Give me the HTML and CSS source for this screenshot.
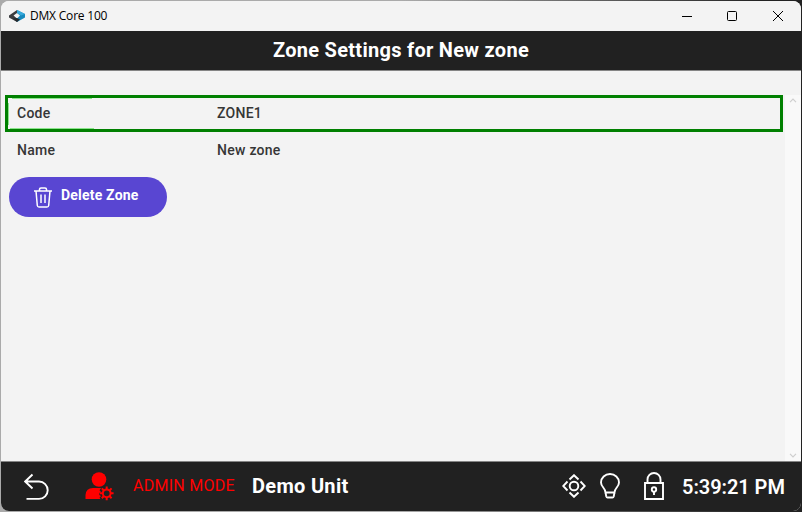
FILE: index.html
```html
<!DOCTYPE html>
<html lang="en">
<head>
<meta charset="utf-8">
<title>DMX Core 100</title>
<link rel="stylesheet" href="styles.css">
</head>
<body>
<div class="window">
  <header class="titlebar">
    <svg class="logo" width="16" height="14" viewBox="0 0 16 14">
      <path d="M0 6.500 8 1v3L4.500 6.500 8 9.500V13L0 8.500z" fill="#3b3d40"/>
      <path d="M8 1l8 4v3.500L8 13V9.500l3-3L8 4z" fill="#1689bd"/>
      <path d="M8 1l8 4-4 1.500L8 4z" fill="#36a9dc"/>
      <path d="M4 9.500 8 9l3 1.500L8 13z" fill="#242a2e"/>
    </svg>
    <span class="app-name">DMX Core 100</span>
    <div class="controls">
      <svg width="10" height="10" viewBox="0 0 10 10"><path d="M0 5.500h10"/></svg>
      <svg width="10" height="10" viewBox="0 0 10 10"><rect x=".5" y=".5" width="9" height="9" rx="1"/></svg>
      <svg width="10" height="10" viewBox="0 0 10 10"><path d="M0 0l10 10M10 0 0 10"/></svg>
    </div>
  </header>
  <h1 class="heading"><span>Zone Settings for New zone</span></h1>
  <main class="content">
    <div class="settings">
      <div class="row selected"><span class="label">Code</span><span>ZONE1</span></div>
      <div class="row"><span class="label">Name</span><span>New zone</span></div>
      <button class="delete">
        <svg width="20" height="21" viewBox="0 0 20 21"><path d="M1 4h18M6.500 4V2.200Q6.500 1 8 1h4q1.500 0 1.500 1.200V4M3 4l1.300 14.500Q4.500 20 6 20h8q1.500 0 1.700-1.500L17 4M8 7.500v8.500M12 7.500v8.500"/></svg>
        <span>Delete Zone</span>
      </button>
    </div>
    <div class="scrollbar">
      <svg width="8" height="5" viewBox="0 0 8 5"><path d="M1 4.200 4 1.200l3 3"/></svg>
      <svg width="8" height="5" viewBox="0 0 8 5"><path d="M1 .8l3 3 3-3"/></svg>
    </div>
  </main>
  <footer class="statusbar">
    <svg class="back" width="25" height="28" viewBox="0 0 25 28"><path d="M8.500 1.500 1.200 8.500l7.300 7M1.200 8.500H15a8.700 8.700 0 0 1 0 17.400H2.500"/></svg>
    <svg class="admin" width="29" height="29" viewBox="0 0 29 29">
      <circle cx="14" cy="7.500" r="7.300"/>
      <path d="M.5 27v-4Q1 16 8 16h8.200l-1.700 2.200 1.500 1.800-1.700 1v2l1.700 1-1.500 1.800 1 1.200z"/>
      <circle class="gear" cx="21.700" cy="21.300" r="3.900"/>
      <path class="teeth" d="M21.700 17v-2.600M21.700 25.600v2.600M17.400 21.300h-2.600M26 21.300h2.600M18.700 18.300l-1.900-1.900M24.700 24.300l1.900 1.900M24.700 18.300l1.900-1.900M18.700 24.300l-1.900 1.900"/>
    </svg>
    <span class="mode">ADMIN MODE</span>
    <span class="unit">Demo Unit</span>
    <svg class="locate" width="24" height="24" viewBox="0 0 24 24"><circle cx="12" cy="12" r="4.300"/><path d="M7.500 5.500 12 1.200l4.500 4.300M7.500 18.500l4.500 4.300 4.500-4.300M5.500 7.500 1.200 12l4.300 4.500M18.500 7.500l4.300 4.500-4.300 4.500"/></svg>
    <svg class="bulb" width="20" height="26" viewBox="0 0 20 26"><path d="M5.500 19.500C5.500 15 1 14 1 9.500a9 8.500 0 0 1 18 0c0 4.500-4.500 5.500-4.500 10zM5.500 19.500l.8 4q.3 1 1.200 1h5q.9 0 1.200-1l.8-4"/></svg>
    <svg class="lock" width="20" height="28" viewBox="0 0 20 28"><path d="M1 11h18v16H1zM3.500 11V7.500a6.500 6.500 0 0 1 13 0V11M10 19v4"/><circle cx="10" cy="17.500" r="2.200"/></svg>
    <time class="clock">5:39:21 PM</time>
  </footer>
</div>
</body>
</html>
```

FILE: styles.css
```css
* { box-sizing: border-box; }
body {
  display: flow-root;
  margin: 0;
  height: 512px;
  overflow: hidden;
  background: linear-gradient(90deg, #aaa 0 50%, #222 95%);
  font-family: Roboto, sans-serif;
}
svg { display: block; flex: none; fill: none; }
.window {
  display: flex;
  flex-direction: column;
  width: 800px;
  height: 510px;
  margin: 1px;
  overflow: hidden;
  border-radius: 8px;
  background: #f3f3f3;
}
.titlebar {
  display: flex;
  align-items: center;
  flex: none;
  height: 30px;
  padding: 0 18px 0 8px;
  background: #f3f3f3;
}
.app-name {
  margin-left: 5px;
  font: 12px/16px "Open Sans", sans-serif;
  letter-spacing: -0.2px;
  color: #000;
}
.controls { display: flex; gap: 36px; margin-left: auto; stroke: #000; stroke-width: 1; }
.controls svg:first-child { position: relative; left: 1px; }
.heading {
  flex: none;
  height: 40px;
  margin: 0;
  border-bottom: 1px solid #858585;
  background: #212121;
  color: #fff;
  font-size: 20px;
  font-weight: 700;
  letter-spacing: 0.28px;
  line-height: 38px;
  text-align: center;
}
.content { display: flex; flex: 1; padding-top: 24px; }
.settings { flex: 1; padding-left: 4px; }
.row {
  display: flex;
  align-items: center;
  width: 778px;
  height: 37px;
  padding: 0 0 2px 12px;
  font-size: 14px;
  font-weight: 500;
  letter-spacing: 0.27px;
  color: #363636;
}
.selected {
  padding-left: 9px;
  border: 3px solid #008000;
  background:
    linear-gradient(#8be58b, #8be58b) 4px 0 / 80px 1px no-repeat,
    linear-gradient(#8be58b, #8be58b) 2px 100% / 84px 1px no-repeat,
    linear-gradient(#8be58b, #8be58b) 0 5px / 1px 22px no-repeat;
}
.label { width: 200px; }
.delete {
  display: flex;
  align-items: center;
  width: 158px;
  height: 40px;
  margin: 8px 0 0 4px;
  padding: 0 0 0 24px;
  border: 0;
  border-radius: 20px;
  background: #5946d2;
  color: #fff;
  font: 700 14px/20px Roboto, sans-serif;
  letter-spacing: 0.2px;
}
.delete svg { stroke: #fff; stroke-width: 1.5; }
.delete span { margin: -4px 0 0 8px; }
.scrollbar {
  display: flex;
  flex-direction: column;
  align-items: center;
  justify-content: space-between;
  width: 16px;
  padding: 3px 0;
  background: #f9f9f9;
  stroke: #cfcfcf;
  stroke-width: 1.2;
}
.statusbar {
  display: flex;
  align-items: center;
  flex: none;
  height: 50px;
  padding: 0 16px 0 23px;
  border-top: 1px solid #858585;
  background: #212121;
  color: #fff;
  stroke: #fff;
  stroke-width: 1.9;
}
.back { position: relative; left: -0.5px; }
.admin { margin-left: 36px; fill: #f00; stroke: none; }
.gear { fill: #212121; stroke: #f00; stroke-width: 2; }
.teeth { stroke: #f00; stroke-width: 2; }
.mode { width: 102px; margin: -2px 0 0 19px; color: #f00; font-size: 16px; letter-spacing: 0.27px; white-space: nowrap; }
.unit { margin: -1px 0 0 17px; font-size: 20px; font-weight: 700; letter-spacing: 0.3px; }
.mode, .unit, .clock { stroke: none; }
.locate { margin-left: auto; }
.locate, .bulb, .lock { position: relative; top: -1px; }
.bulb { margin-left: 14px; }
.lock { margin-left: 24px; }
.clock { width: 103px; margin-left: 18px; font-size: 20px; font-weight: 600; letter-spacing: -0.05px; white-space: nowrap; }
```
